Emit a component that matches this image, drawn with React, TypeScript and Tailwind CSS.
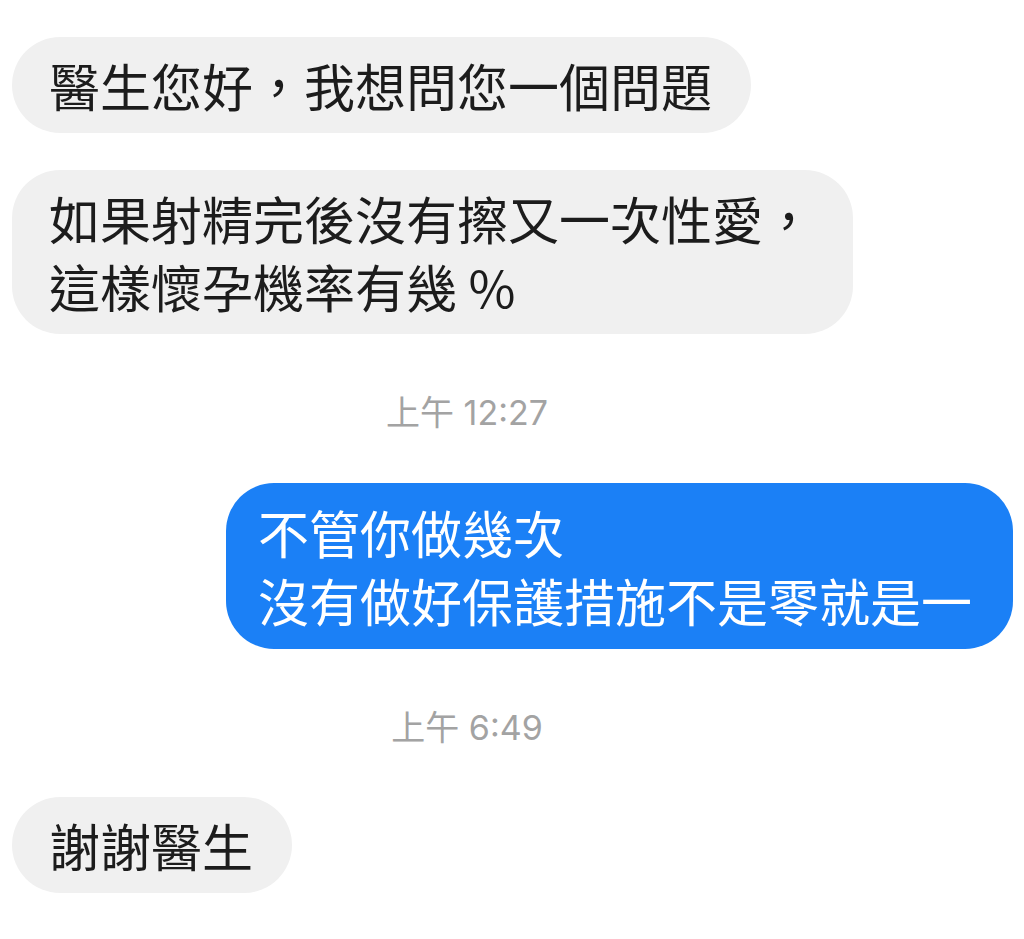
const cjk = { fontFamily: '"Noto Sans CJK TC", "Noto Sans CJK SC", sans-serif' };
const stamp = { fontFamily: 'Inter, "Noto Sans CJK TC", sans-serif' };

function Received({ children, className = "" }: { children: React.ReactNode; className?: string }) {
  return (
    <div
      className={`self-start rounded-[48px] bg-[#f0f0f0] pl-[37px] pr-[39px] py-[14px] text-[51px] leading-[68px] text-[#1c1c1c] ${className}`}
      style={cjk}
    >
      {children}
    </div>
  );
}

function Stamp({ children, className = "" }: { children: React.ReactNode; className?: string }) {
  return (
    <div className={`flex justify-center pr-[90px] ${className}`}>
      <span className="text-[34px] leading-[40px] text-[#a3a3a3]" style={stamp}>
        {children}
      </span>
    </div>
  );
}

export default function App() {
  return (
    <div className="w-[1024px] h-[939px] overflow-hidden bg-white flex flex-col px-[12px] pt-[37px]">
      <Received>醫生您好，我想問您一個問題</Received>

      <Received className="mt-[37px]">
        如果射精完後沒有擦又一次性愛，
        <br />
        這樣懷孕機率有幾 %
      </Received>

      <Stamp className="mt-[59px]">上午 12:27</Stamp>

      <div
        className="self-end mr-[-1px] mt-[50px] rounded-[48px] bg-[#1b80f6] pl-[32px] pr-[41px] py-[15px] text-[51px] leading-[68px] text-white"
        style={cjk}
      >
        不管你做幾次
        <br />
        沒有做好保護措施不是零就是一
      </div>

      <Stamp className="mt-[59px]">上午 6:49</Stamp>

      <Received className="mt-[49px]">謝謝醫生</Received>
    </div>
  );
}
